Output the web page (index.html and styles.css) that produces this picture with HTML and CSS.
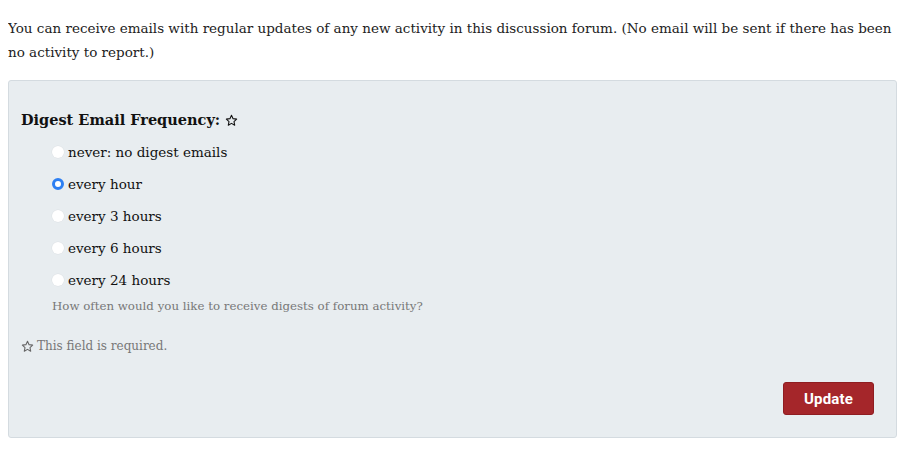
FILE: index.html
```html
<!DOCTYPE html>
<html lang="en">
<head>
<meta charset="utf-8">
<title>Digest settings</title>
<link rel="stylesheet" href="styles.css">
</head>
<body>
<p class="intro">You can receive emails with regular updates of any new activity in this discussion forum. (No email will be sent if there has been no activity to report.)</p>
<form class="panel">
  <div class="field-title">Digest Email Frequency: <svg class="star" viewBox="0 0 24 24" width="13" height="13"><path d="M12 2.5l2.9 6.1 6.6.8-4.9 4.6 1.3 6.6L12 17.3l-5.9 3.3 1.3-6.6-4.9-4.6 6.6-.8z" fill="none" stroke="#111" stroke-width="2" stroke-linejoin="round"/></svg></div>
  <div class="options">
    <label class="opt"><input type="radio" name="freq"><span>never: no digest emails</span></label>
    <label class="opt"><input type="radio" name="freq" checked><span>every hour</span></label>
    <label class="opt"><input type="radio" name="freq"><span>every 3 hours</span></label>
    <label class="opt"><input type="radio" name="freq"><span>every 6 hours</span></label>
    <label class="opt"><input type="radio" name="freq"><span>every 24 hours</span></label>
    <div class="help">How often would you like to receive digests of forum activity?</div>
  </div>
  <div class="required"><svg class="star" viewBox="0 0 24 24" width="13" height="13"><path d="M12 2.5l2.9 6.1 6.6.8-4.9 4.6 1.3 6.6L12 17.3l-5.9 3.3 1.3-6.6-4.9-4.6 6.6-.8z" fill="none" stroke="#666" stroke-width="2" stroke-linejoin="round"/></svg> This field is required.</div>
  <div class="actions"><button type="button" class="btn">Update</button></div>
</form>
</body>
</html>
```
FILE: styles.css
```css
body {
  margin: 8px;
  font-family: "DejaVu Serif", Georgia, serif;
  color: #222;
  background: #fff;
}
.intro {
  margin: 8px 0 16px;
  font-size: 13.5px;
  line-height: 24px;
  color: #222;
}
.panel {
  margin: 0;
  background: #e8edf0;
  border: 1px solid #d4dbe0;
  border-radius: 3px;
  padding: 27px 22px 22px 12px;
}
.field-title {
  font-weight: bold;
  font-size: 14.5px;
  line-height: 24px;
  color: #111;
  display: flex;
  align-items: center;
  gap: 2px;
}
.field-title .star { margin-left: 3px; }
.options {
  margin-top: 4px;
  padding-left: 31px;
}
.opt {
  display: flex;
  align-items: center;
  height: 32px;
  font-size: 13.5px;
  color: #111;
}
.opt input {
  appearance: none;
  -webkit-appearance: none;
  margin: 0 4px 0 0;
  width: 12px;
  height: 12px;
  border-radius: 50%;
  background: #fff;
  box-shadow: 0 0 0 0.5px #dde1e4;
  flex: none;
}
.opt input:checked {
  background: #fff;
  border: 3.5px solid #2d7ff2;
  box-shadow: none;
  box-sizing: border-box;
}
.help {
  font-size: 11.8px;
  line-height: 20px;
  color: #777;
}
.required {
  margin-top: 20px;
  font-size: 12px;
  line-height: 20px;
  color: #777;
  display: flex;
  align-items: center;
  gap: 3px;
}
.actions {
  margin-top: 26px;
  display: flex;
  justify-content: flex-end;
}
.btn {
  font-family: Roboto, "Liberation Sans", sans-serif;
  font-weight: 700;
  font-size: 15px;
  color: #fff;
  background: #a5262a;
  border: 1px solid #8f1d21;
  border-radius: 3px;
  width: 91px;
  height: 33px;
  padding: 0;
  letter-spacing: 0.2px;
}
```
